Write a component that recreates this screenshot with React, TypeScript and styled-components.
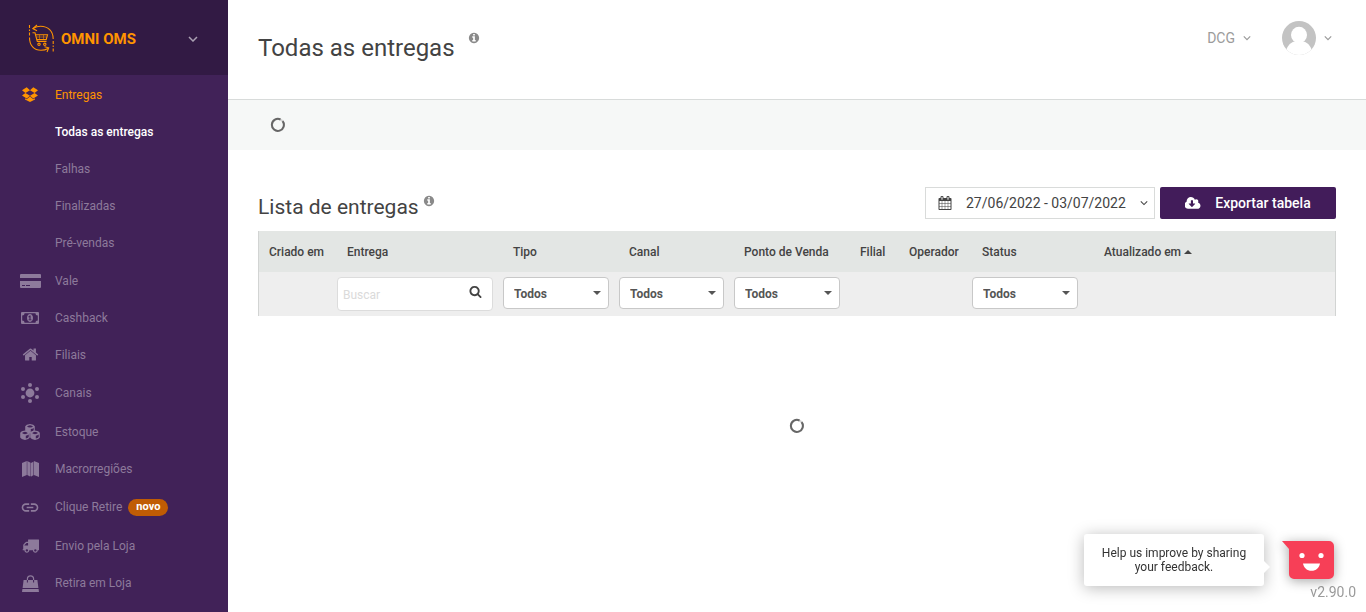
import React from 'react';
import styled, { createGlobalStyle, css } from 'styled-components';
import { MdLink } from 'react-icons/md';

const GlobalStyle = createGlobalStyle`
  *, *::before, *::after { box-sizing: border-box; }
  body {
    margin: 0;
    background: #fff;
    color: #434343;
    font-family: Roboto, 'Liberation Sans', sans-serif;
    font-size: 12px;
  }
  button, input, select { font: inherit; color: inherit; }
  button { cursor: pointer; }
`;

/* ---------- icons ---------- */

const Svg = styled.svg<{ $w: number; $h?: number }>`
  display: block;
  flex: none;
  width: ${p => p.$w}px;
  height: ${p => p.$h ?? p.$w}px;
  fill: currentColor;
`;

const InfoIcon = () => (
  <Svg $w={12} viewBox="0 0 1792 1792" aria-hidden="true">
    <path d="M1152 1376v-160q0-14-9-23t-23-9h-96v-512q0-14-9-23t-23-9h-320q-14 0-23 9t-9 23v160q0 14 9 23t23 9h96v320h-96q-14 0-23 9t-9 23v160q0 14 9 23t23 9h448q14 0 23-9t9-23zm-128-896v-160q0-14-9-23t-23-9h-192q-14 0-23 9t-9 23v160q0 14 9 23t23 9h192q14 0 23-9t9-23zm640 416q0 209-103 385.5t-279.5 279.5-385.5 103-385.5-103-279.5-279.5-103-385.5 103-385.5 279.5-279.5 385.5-103 385.5 103 279.5 279.5 103 385.5z" />
  </Svg>
);

const CalendarIcon = () => (
  <Svg $w={14} viewBox="0 0 1792 1792" aria-hidden="true">
    <path d="M192 1664h288v-288h-288v288zm352 0h320v-288h-320v288zm-352-352h288v-320h-288v320zm352 0h320v-320h-320v320zm-352-384h288v-288h-288v288zm736 736h320v-288h-320v288zm-384-736h320v-288h-320v288zm768 736h288v-288h-288v288zm-384-352h320v-320h-320v320zm-352-864v-288q0-13-9.5-22.5t-22.5-9.5h-64q-13 0-22.5 9.5t-9.5 22.5v288q0 13 9.5 22.5t22.5 9.5h64q13 0 22.5-9.5t9.5-22.5zm736 864h288v-320h-288v320zm-384-384h320v-288h-320v288zm384 0h288v-288h-288v288zm32-480v-288q0-13-9.5-22.5t-22.5-9.5h-64q-13 0-22.5 9.5t-9.5 22.5v288q0 13 9.5 22.5t22.5 9.5h64q13 0 22.5-9.5t9.5-22.5zm384-64v1280q0 52-38 90t-90 38h-1408q-52 0-90-38t-38-90v-1280q0-52 38-90t90-38h128v-96q0-66 47-113t113-47h64q66 0 113 47t47 113v96h384v-96q0-66 47-113t113-47h64q66 0 113 47t47 113v96h128q52 0 90 38t38 90z" />
  </Svg>
);

const CloudIcon = () => (
  <Svg $w={16} $h={15} viewBox="0 0 1920 1792" aria-hidden="true">
    <path d="M1216 928q0-14-9-23t-23-9h-224v-352q0-13-9.5-22.5t-22.5-9.5h-192q-13 0-22.5 9.5t-9.5 22.5v352h-224q-13 0-22.5 9.5t-9.5 22.5q0 14 9 23l352 352q9 9 23 9t23-9l351-351q10-12 10-24zm640 224q0 159-112.5 271.5t-271.5 112.5h-1088q-185 0-316.5-131.5t-131.5-316.5q0-130 70-240t188-165q-2-30-2-43 0-212 150-362t362-150q156 0 285.5 87t188.5 231q71-62 166-62 106 0 181 75t75 181q0 76-41 138 130 31 213.5 135.5t83.5 238.5z" />
  </Svg>
);

const SearchIcon = () => (
  <Svg $w={13} $h={18} viewBox="0 0 1792 2482" aria-hidden="true">
    <path d="M1216 832q0-185-131.5-316.5t-316.5-131.5-316.5 131.5-131.5 316.5 131.5 316.5 316.5 131.5 316.5-131.5 131.5-316.5zm512 832q0 52-38 90t-90 38q-54 0-90-38l-343-342q-179 124-399 124-143 0-273.5-55.5t-225-150-150-225-55.5-273.5 55.5-273.5 150-225 225-150 273.5-55.5 273.5 55.5 225 150 150 225 55.5 273.5q0 220-124 399l343 343q37 37 37 90z" />
  </Svg>
);

const HomeIcon = () => (
  <Svg $w={17} viewBox="0 0 1792 1792" aria-hidden="true">
    <path d="M1472 992v480q0 26-19 45t-45 19h-384v-384h-256v384h-384q-26 0-45-19t-19-45v-480q0-1 .5-3t.5-3l575-474 575 474q1 2 1 6zm223-69l-62 74q-8 9-21 11h-3q-13 0-21-7l-692-577-692 577q-12 8-24 7-13-2-21-11l-62-74q-8-10-7-23.5t11-21.5l719-599q32-26 76-26t76 26l244 204v-195q0-14 9-23t23-9h192q14 0 23 9t9 23v408l219 182q10 8 11 21.5t-7 23.5z" />
  </Svg>
);

const TruckIcon = () => (
  <Svg $w={17} viewBox="0 0 1792 1792" aria-hidden="true">
    <path d="M640 1408q0-52-38-90t-90-38-90 38-38 90 38 90 90 38 90-38 38-90zm-384-512h384v-256h-158q-13 0-22 9l-195 195q-9 9-9 22v30zm1280 512q0-52-38-90t-90-38-90 38-38 90 38 90 90 38 90-38 38-90zm256-1088v1024q0 15-4 26.5t-13.5 18.5-16.5 11.5-23.5 6-22.5 2-25.5 0-22.5-.5q0 106-75 181t-181 75-181-75-75-181h-384q0 106-75 181t-181 75-181-75-75-181h-64q-3 0-22.5.5t-25.5 0-22.5-2-23.5-6-16.5-11.5-13.5-18.5-4-26.5q0-26 19-45t45-19v-320q0-8-.5-35t0-38 2.5-34.5 6.5-37 14-30.5 22.5-30l198-198q19-19 50.5-32t58.5-13h160v-192q0-26 19-45t45-19h1024q26 0 45 19t19 45z" />
  </Svg>
);

const BoxIcon = () => (
  <Svg $w={16} $h={15} viewBox="0 0 16 15" aria-hidden="true">
    <path d="M4.700 .3L8 3.200 3.400 5.900 0 3.200zM11.300 .3L8 3.200l4.600 2.700L16 3.200zM3.400 5.900L8 8.800 4.700 11.500 0 8.600zM12.600 5.900L8 8.800l3.300 2.700L16 8.600zM8 9.500l3.300 2.700 1.700-1v1.200L8 15l-5-2.600v-1.200l1.700 1z" />
  </Svg>
);

const CardIcon = () => (
  <Svg $w={21} $h={14} viewBox="0 0 21 14" aria-hidden="true">
    <path
      fillRule="evenodd"
      d="M1 0h19a1 1 0 0 1 1 1v3H0V1a1 1 0 0 1 1-1zM0 7h21v6a1 1 0 0 1-1 1H1a1 1 0 0 1-1-1zM2 11v1h3v-1zM6 11v1h4v-1z"
    />
  </Svg>
);

const CashIcon = () => (
  <Svg $w={18} $h={12} viewBox="0 0 18 12" aria-hidden="true">
    <path
      fillRule="evenodd"
      d="M1 0h16a1 1 0 0 1 1 1v10a1 1 0 0 1-1 1H1a1 1 0 0 1-1-1V1a1 1 0 0 1 1-1zM3.6 1.2A2.4 2.4 0 0 1 1.2 3.6v4.8A2.4 2.4 0 0 1 3.6 10.8h10.8a2.4 2.4 0 0 1 2.4-2.4V3.6a2.4 2.4 0 0 1-2.4-2.4zM9 2.1c1.8 0 3 1.7 3 3.9s-1.2 3.9-3 3.9S6 8.200 6 6s1.200-3.900 3-3.900zM8.600 3.500L7.300 4.700l.6.7.5-.4v2.400h-.9v.9h3v-.9h-.9V3.500z"
    />
  </Svg>
);

const HubIcon = () => (
  <Svg $w={18} $h={20} viewBox="0 0 18 20" aria-hidden="true">
    <circle cx="9" cy="10" r="4.400" />
    <circle cx="9" cy="2" r="2" />
    <circle cx="9" cy="18" r="2" />
    <circle cx="2" cy="6" r="2" />
    <circle cx="16" cy="6" r="2" />
    <circle cx="2" cy="14" r="2" />
    <circle cx="16" cy="14" r="2" />
  </Svg>
);

const Cube = ({ x, y }: { x: number; y: number }) => (
  <g transform={`translate(${x} ${y})`}>
    <path
      fillRule="evenodd"
      d="M5 0Q9 .6 9.800 2.200V6.800Q9 8.600 5 9.400 1 8.600 .2 6.800V2.200Q1 .6 5 0zM5 1.200Q3 1.500 2 2.400 3 3.300 5 3.600 7 3.300 8 2.400 7 1.500 5 1.200zM8.700 4Q7.600 4.800 5.800 5.100V8Q8 7.400 8.700 6.300z"
    />
  </g>
);

const CubesIcon = () => (
  <Svg $w={20} $h={16} viewBox="0 0 20 16" aria-hidden="true">
    <Cube x={5} y={0} />
    <Cube x={0} y={6.600} />
    <Cube x={10} y={6.600} />
  </Svg>
);

const MapIcon = () => (
  <Svg $w={17} $h={16} viewBox="0 0 17 16" aria-hidden="true">
    <path d="M0 2L4.800 0v14L0 16zM5.300 0L8 1.600v14L5.300 14zM9 1.900L11.400 .8v13.500L9 15.600zM11.900 0L17 2v14l-5.100-2z" />
    <path d="M7.500 1.300l2 .7v13.600l-2-.5z" opacity="0.6" />
  </Svg>
);

const BagIcon = () => (
  <Svg $w={17} $h={17} viewBox="0 0 17 17" aria-hidden="true">
    <path d="M1.600 5h13.800l1 8H.6zM.4 14h16.200l.4 3H0z" />
    <path d="M5.400 5V4a3.100 3.100 0 0 1 6.200 0v1" fill="none" stroke="currentColor" strokeWidth="1.200" />
    <path d="M5.400 5v2.500M11.600 5v2.500" stroke="#412258" strokeWidth="1" />
  </Svg>
);

const Chevron = ({ w = 10, stroke = 1.5 }: { w?: number; stroke?: number }) => (
  <Svg $w={w} $h={6} viewBox="0 0 10 6" aria-hidden="true">
    <path d="M1 1l4 4 4-4" fill="none" stroke="currentColor" strokeWidth={stroke} />
  </Svg>
);

const LogoMark = () => (
  <Svg $w={28} $h={30} viewBox="0 0 28 30" aria-hidden="true">
    <g fill="none" stroke="#ff9400" strokeWidth="1.100">
      <path d="M2.500 1v11" strokeDasharray="3 1.500 1.500 1.500" />
      <path d="M2.500 13.500c0 8 4.500 12.800 11.500 12.800 2.500 0 5-.6 7-1.800" />
      <path d="M17.500 22.800l4.200 1-1.700 4.200" />
      <path d="M6.500 4.200C8.500 3 10.500 2.300 13.500 2.300c7.500 0 12.700 4.800 12.700 12.700" />
      <path d="M10 1L5.800 4.600l4.200 2.200" />
      <path d="M26.200 17v12" strokeDasharray="3 1.500 1.500 1.500" />
      <path d="M5.500 8.800H8l2.300 8.700h9.200" />
      <path d="M8.500 10.800h12l-1.300 4.800H9.700" />
      <path d="M9.300 13h10.500M12.500 11v4.500M16.500 11v4.500" strokeWidth="0.500" />
      <circle cx="12" cy="20.300" r="1.200" />
      <circle cx="17.800" cy="20.300" r="1.200" />
    </g>
  </Svg>
);

const Avatar = () => (
  <Svg $w={34} viewBox="0 0 34 34" aria-hidden="true">
    <defs>
      <clipPath id="avatar-clip">
        <circle cx="17" cy="17" r="17" />
      </clipPath>
    </defs>
    <g clipPath="url(#avatar-clip)">
      <rect width="34" height="34" fill="#c3c3c3" />
      <ellipse cx="17" cy="14" rx="8" ry="8.300" fill="#fff" />
      <path d="M3 34c1-8 5-12.500 9.500-13.500h9c4.500 1 8.500 5.500 9.500 13.500z" fill="#fff" />
    </g>
  </Svg>
);

const Spinner = () => (
  <Svg $w={16} viewBox="0 0 16 16" role="img" aria-label="Carregando">
    <circle cx="8" cy="8" r="6" fill="none" stroke="#d4d4d4" strokeWidth="2" />
    <path d="M12.600 4.200A6 6 0 1 1 10.500 2.500" fill="none" stroke="#666" strokeWidth="2" />
  </Svg>
);

const Face = () => (
  <Svg $w={52} $h={38} viewBox="0 0 52 38" aria-hidden="true">
    <path d="M0 0h47a5 5 0 0 1 5 5v28a5 5 0 0 1-5 5H12a5 5 0 0 1-5-5V8z" fill="#f73f57" />
    <circle cx="20" cy="14.500" r="2.600" fill="#fff" />
    <circle cx="39" cy="14.500" r="2.600" fill="#fff" />
    <path d="M21 22.500h17c-.8 4.500-4 7.300-8.500 7.300s-7.700-2.800-8.500-7.300z" fill="#fff" />
  </Svg>
);

/* ---------- sidebar ---------- */

const Page = styled.div`
  display: flex;
  min-height: 100vh;
`;

const Sidebar = styled.aside`
  flex: none;
  width: 228px;
  background: #412258;
`;

const Brand = styled.button`
  display: flex;
  align-items: center;
  width: 100%;
  height: 75px;
  padding: 3px 30px 0 27px;
  border: 0;
  background: #321a44;
  color: #aaa0b2;
`;

const BrandName = styled.span`
  flex: 1;
  padding-left: 6px;
  text-align: left;
  color: #ff9400;
  font-size: 15px;
  font-weight: 700;
`;

const Menu = styled.ul`
  margin: 0;
  padding: 1px 0 0;
  list-style: none;
`;

type Tone = 'normal' | 'accent' | 'current';
const tones: Record<Tone, string> = { normal: '#8d7a9b', accent: '#ff9400', current: '#fff' };

const MenuLink = styled.a<{ $tone: Tone; $height: number }>`
  display: flex;
  align-items: center;
  height: ${p => p.$height}px;
  color: ${p => tones[p.$tone]};
  font-weight: ${p => (p.$tone === 'current' ? 500 : 400)};
  text-decoration: none;
`;

const IconSlot = styled.span`
  display: flex;
  justify-content: center;
  width: 20px;
  margin: 0 15px 0 20px;
`;

const Badge = styled.span`
  height: 17px;
  margin-left: 6px;
  padding: 0 8px;
  border-radius: 9px;
  background: #c05c04;
  color: #fff;
  font-size: 11px;
  font-weight: 700;
  line-height: 16px;
`;

type Item = { label: string; icon?: React.ReactNode; tone?: Tone; height?: number; badge?: string };

const items: Item[] = [
  { label: 'Entregas', icon: <BoxIcon />, tone: 'accent' },
  { label: 'Todas as entregas', tone: 'current' },
  { label: 'Falhas' },
  { label: 'Finalizadas' },
  { label: 'Pré-vendas', height: 38 },
  { label: 'Vale', icon: <CardIcon /> },
  { label: 'Cashback', icon: <CashIcon /> },
  { label: 'Filiais', icon: <HomeIcon /> },
  { label: 'Canais', icon: <HubIcon />, height: 40 },
  { label: 'Estoque', icon: <CubesIcon /> },
  { label: 'Macrorregiões', icon: <MapIcon /> },
  { label: 'Clique Retire', icon: <MdLink size={23} />, height: 40, badge: 'novo' },
  { label: 'Envio pela Loja', icon: <TruckIcon />, height: 37 },
  { label: 'Retira em Loja', icon: <BagIcon />, height: 38 },
];

/* ---------- main ---------- */

const Main = styled.main`
  flex: 1;
  min-width: 0;
`;

const TopBar = styled.header`
  display: flex;
  align-items: center;
  justify-content: space-between;
  height: 100px;
  padding: 0 34px 24px 30px;
  border-bottom: 1px solid #d8dbda;
`;

const Heading = styled.div<{ $gap: number; $top: number }>`
  display: flex;
  align-items: flex-start;
  gap: ${p => p.$gap}px;
  padding-top: ${p => p.$top}px;
  color: #8a8a8a;
`;

const Title = styled.h1`
  margin: 0;
  color: #434343;
  font-size: 24px;
  font-weight: 400;
  line-height: 32px;
`;

const Subtitle = styled.h2`
  margin: 0;
  color: #434343;
  font-size: 21px;
  font-weight: 400;
  line-height: 24px;
`;

const Account = styled.div`
  display: flex;
  align-items: center;
  gap: 31px;
`;

const AccountButton = styled.button`
  display: flex;
  align-items: center;
  gap: 8px;
  padding: 0;
  border: 0;
  background: none;
  color: #9b9b9b;
  font-size: 14px;
`;

const SummaryBand = styled.div`
  display: flex;
  align-items: center;
  height: 50px;
  padding: 0 42px;
  background: #f6f8f7;
`;

const Content = styled.section`
  padding: 37px 30px 0;
`;

const ListHeader = styled.div`
  display: flex;
  align-items: center;
  justify-content: space-between;
  margin-bottom: 12px;
`;

const Actions = styled.div`
  display: flex;
  gap: 5px;
`;

const DateButton = styled.button`
  display: flex;
  align-items: center;
  width: 230px;
  height: 32px;
  padding: 0 6px 0 12px;
  border: 1px solid #d9dbda;
  background: #fff;
  font-size: 14px;
`;

const DateText = styled.span`
  flex: 1;
  padding-left: 14px;
  text-align: left;
  white-space: nowrap;
`;

const ExportButton = styled.button`
  display: flex;
  align-items: center;
  justify-content: center;
  gap: 14px;
  width: 176px;
  height: 32px;
  border: 0;
  border-radius: 2px;
  background: #421c5a;
  color: #fff;
  font-size: 14px;
  font-weight: 500;
`;

const Table = styled.table`
  width: 100%;
  border: solid #d2d4d3;
  border-width: 0 1px;
  border-spacing: 0;
  table-layout: fixed;
`;

const HeadCell = styled.th`
  height: 41px;
  padding: 0 0 0 10px;
  background: #e3e6e4;
  font-size: 12px;
  font-weight: 500;
  text-align: left;
  white-space: nowrap;
`;

const FilterCell = styled.td`
  height: 44px;
  padding: 5px 10px 0 0;
  background: #eee;
  vertical-align: top;
`;

const SortButton = styled.button`
  display: flex;
  align-items: center;
  gap: 3px;
  padding: 0;
  border: 0;
  background: none;
`;

const SortArrow = styled.span`
  border: solid transparent;
  border-width: 0 4px 4px;
  border-bottom-color: #434343;
`;

const box = css`
  border: 1px solid #c8c8c8;
  border-radius: 4px;
  background: #fff;
`;

const SearchBox = styled.label`
  ${box}
  display: flex;
  align-items: center;
  height: 34px;
  padding: 0 10px 0 5px;
  border-color: #dcdcdc;
`;

const SearchInput = styled.input`
  flex: 1;
  min-width: 0;
  padding: 2px 0 0;
  border: 0;
  outline: 0;
  background: none;
  &::placeholder { color: #dadada; opacity: 1; }
`;

const SelectWrap = styled.div`
  position: relative;
  &::after {
    content: '';
    position: absolute;
    top: 14px;
    right: 8px;
    border: solid transparent;
    border-width: 4px 4px 0;
    border-top-color: #555;
    pointer-events: none;
  }
`;

const Select = styled.select`
  ${box}
  display: block;
  width: 100%;
  height: 32px;
  padding: 2px 10px 0;
  appearance: none;
  color: #555;
  font-size: 12px;
  font-weight: 700;
`;

const Loading = styled.div`
  display: flex;
  justify-content: center;
  padding: 102px 0;
`;

/* ---------- floating feedback ---------- */

const Feedback = styled.div`
  position: fixed;
  right: 32px;
  bottom: 26px;
  display: flex;
  align-items: center;
  gap: 18px;
`;

const Bubble = styled.div`
  position: relative;
  width: 180px;
  padding: 12px 10px;
  border-radius: 3px;
  background: #fff;
  box-shadow: 0 2px 16px rgba(0, 0, 0, 0.28);
  color: #333;
  font-size: 12px;
  line-height: 14px;
  text-align: center;
  &::after {
    content: '';
    position: absolute;
    top: 27px;
    left: 100%;
    border: 6px solid transparent;
    border-right: 0;
    border-left-color: #fff;
  }
`;

const FaceButton = styled.button`
  padding: 0;
  border: 0;
  background: none;
  filter: drop-shadow(0 2px 6px rgba(0, 0, 0, 0.35));
`;

const Version = styled.span`
  position: fixed;
  right: 10px;
  bottom: 12px;
  color: #9b9b9b;
  font-size: 14px;
  line-height: 16px;
`;

type Column = { label: string; width?: number; filter?: 'search' | 'select'; sorted?: boolean };

const columns: Column[] = [
  { label: 'Criado em', width: 78 },
  { label: 'Entrega', width: 166, filter: 'search' },
  { label: 'Tipo', width: 116, filter: 'select' },
  { label: 'Canal', width: 115, filter: 'select' },
  { label: 'Ponto de Venda', width: 116, filter: 'select' },
  { label: 'Filial', width: 49 },
  { label: 'Operador', width: 73 },
  { label: 'Status', width: 116, filter: 'select' },
  { label: 'Atualizado em', sorted: true },
];

const Col = styled.col<{ $width?: number }>`
  width: ${p => (p.$width ? `${p.$width}px` : 'auto')};
`;

const SortedHeadCell = styled(HeadCell)`
  padding-left: 16px;
`;

export default function App() {
  return (
    <Page>
      <GlobalStyle />
      <Sidebar>
        <Brand type="button">
          <LogoMark />
          <BrandName>OMNI OMS</BrandName>
          <Chevron />
        </Brand>
        <nav>
          <Menu>
            {items.map(item => (
              <li key={item.label}>
                <MenuLink href="#" $tone={item.tone ?? 'normal'} $height={item.height ?? 37}>
                  <IconSlot>{item.icon}</IconSlot>
                  {item.label}
                  {item.badge && <Badge>{item.badge}</Badge>}
                </MenuLink>
              </li>
            ))}
          </Menu>
        </nav>
      </Sidebar>

      <Main>
        <TopBar>
          <Heading $gap={13} $top={20}>
            <Title>Todas as entregas</Title>
            <InfoIcon />
          </Heading>
          <Account>
            <AccountButton type="button">
              DCG
              <Chevron w={8} />
            </AccountButton>
            <AccountButton type="button" aria-label="Conta">
              <Avatar />
              <Chevron w={8} />
            </AccountButton>
          </Account>
        </TopBar>

        <SummaryBand>
          <Spinner />
        </SummaryBand>

        <Content>
          <ListHeader>
            <Heading $gap={4} $top={8}>
              <Subtitle>Lista de entregas</Subtitle>
              <InfoIcon />
            </Heading>
            <Actions>
              <DateButton type="button">
                <CalendarIcon />
                <DateText>27/06/2022 - 03/07/2022</DateText>
                <Chevron w={8} stroke={1.3} />
              </DateButton>
              <ExportButton type="button">
                <CloudIcon />
                Exportar tabela
              </ExportButton>
            </Actions>
          </ListHeader>

          <Table>
            <colgroup>
              {columns.map(c => (
                <Col key={c.label} $width={c.width} />
              ))}
            </colgroup>
            <thead>
              <tr>
                {columns.map(c =>
                  c.sorted ? (
                    <SortedHeadCell key={c.label} scope="col" aria-sort="ascending">
                      <SortButton type="button">
                        {c.label}
                        <SortArrow />
                      </SortButton>
                    </SortedHeadCell>
                  ) : (
                    <HeadCell key={c.label} scope="col">
                      {c.label}
                    </HeadCell>
                  ),
                )}
              </tr>
            </thead>
            <tbody>
              <tr>
                {columns.map(c => (
                  <FilterCell key={c.label}>
                    {c.filter === 'search' && (
                      <SearchBox>
                        <SearchInput type="text" placeholder="Buscar" aria-label={c.label} />
                        <SearchIcon />
                      </SearchBox>
                    )}
                    {c.filter === 'select' && (
                      <SelectWrap>
                        <Select aria-label={c.label}>
                          <option>Todos</option>
                        </Select>
                      </SelectWrap>
                    )}
                  </FilterCell>
                ))}
              </tr>
            </tbody>
          </Table>

          <Loading>
            <Spinner />
          </Loading>
        </Content>
      </Main>

      <Version>v2.90.0</Version>
      <Feedback>
        <Bubble>Help us improve by sharing your feedback.</Bubble>
        <FaceButton type="button" aria-label="Feedback">
          <Face />
        </FaceButton>
      </Feedback>
    </Page>
  );
}
